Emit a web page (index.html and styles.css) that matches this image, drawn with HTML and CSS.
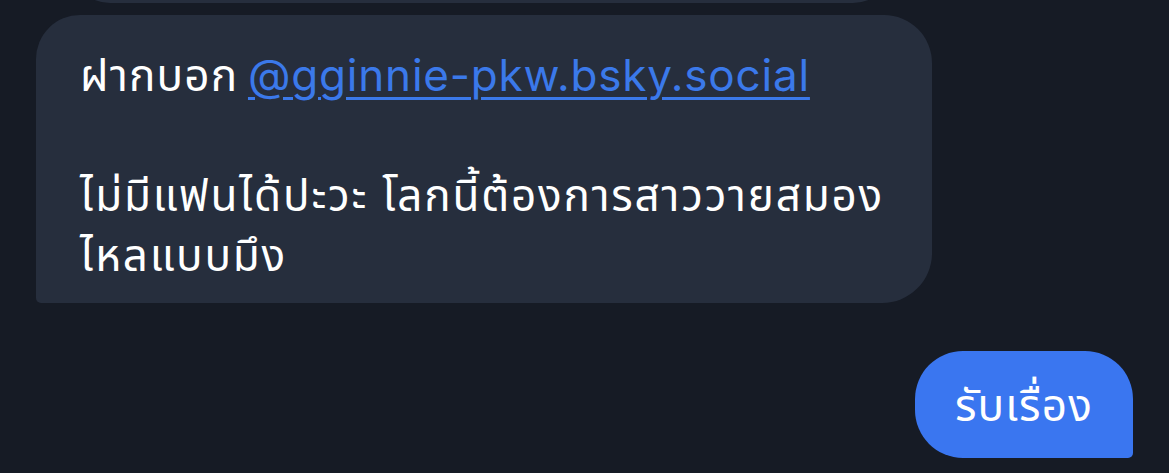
FILE: index.html
```html
<!DOCTYPE html>
<html lang="th">
<head>
    <meta charset="UTF-8">
    <meta name="viewport" content="width=device-width, initial-scale=1.0">
    <title>Chat</title>
    <link rel="stylesheet" href="styles.css">
</head>
<body>
    <div class="chat">
        <div class="prev-bubble"></div>

        <div class="bubble incoming">
            <p class="mention">ฝากบอก <a href="#">@gginnie-pkw.bsky.social</a></p>
            <p class="blank">&nbsp;</p>
            <p>ไม่มีแฟนได้ปะวะ โลกนี้ต้องการสาววายสมอง<br>ไหลแบบมึง</p>
        </div>

        <div class="bubble outgoing">
            <p>รับเรื่อง</p>
        </div>
    </div>
</body>
</html>
```

FILE: styles.css
```css
body {
    margin: 0;
    padding: 0;
    background-color: #161b25;
    font-family: Inter, "Noto Sans Thai", "Noto Sans", sans-serif;
    color: #ffffff;
    overflow: hidden;
}

.chat {
    display: flex;
    flex-direction: column;
    padding: 0 36px;
}

.prev-bubble {
    margin: -60px 240px 0 34px;
    height: 63px;
    background-color: #262e3d;
    border-radius: 0 0 40px 40px;
}

.bubble p {
    margin: 0;
}

.incoming {
    align-self: flex-start;
    width: 896px;
    box-sizing: border-box;
    margin-top: 12px;
    padding: 30px 40px 18px 44px;
    background-color: #262e3d;
    border-radius: 44px 48px 50px 5px;
    font-size: 44px;
    line-height: 60px;
    letter-spacing: 1.8px;
    white-space: nowrap;
}

.mention {
    letter-spacing: 1.2px;
    word-spacing: -4px;
}

.incoming a {
    color: #3b79ea;
    letter-spacing: 0.8px;
    word-spacing: 0;
    text-decoration: underline;
    text-decoration-thickness: 3px;
    text-underline-offset: 6px;
}

.outgoing {
    align-self: flex-end;
    margin-top: 48px;
    width: 218px;
    height: 107px;
    box-sizing: border-box;
    padding-top: 5px;
    display: flex;
    align-items: center;
    justify-content: center;
    background-color: #3a76f0;
    border-radius: 48px 48px 5px 48px;
    font-size: 44px;
    letter-spacing: 1.2px;
}
```
